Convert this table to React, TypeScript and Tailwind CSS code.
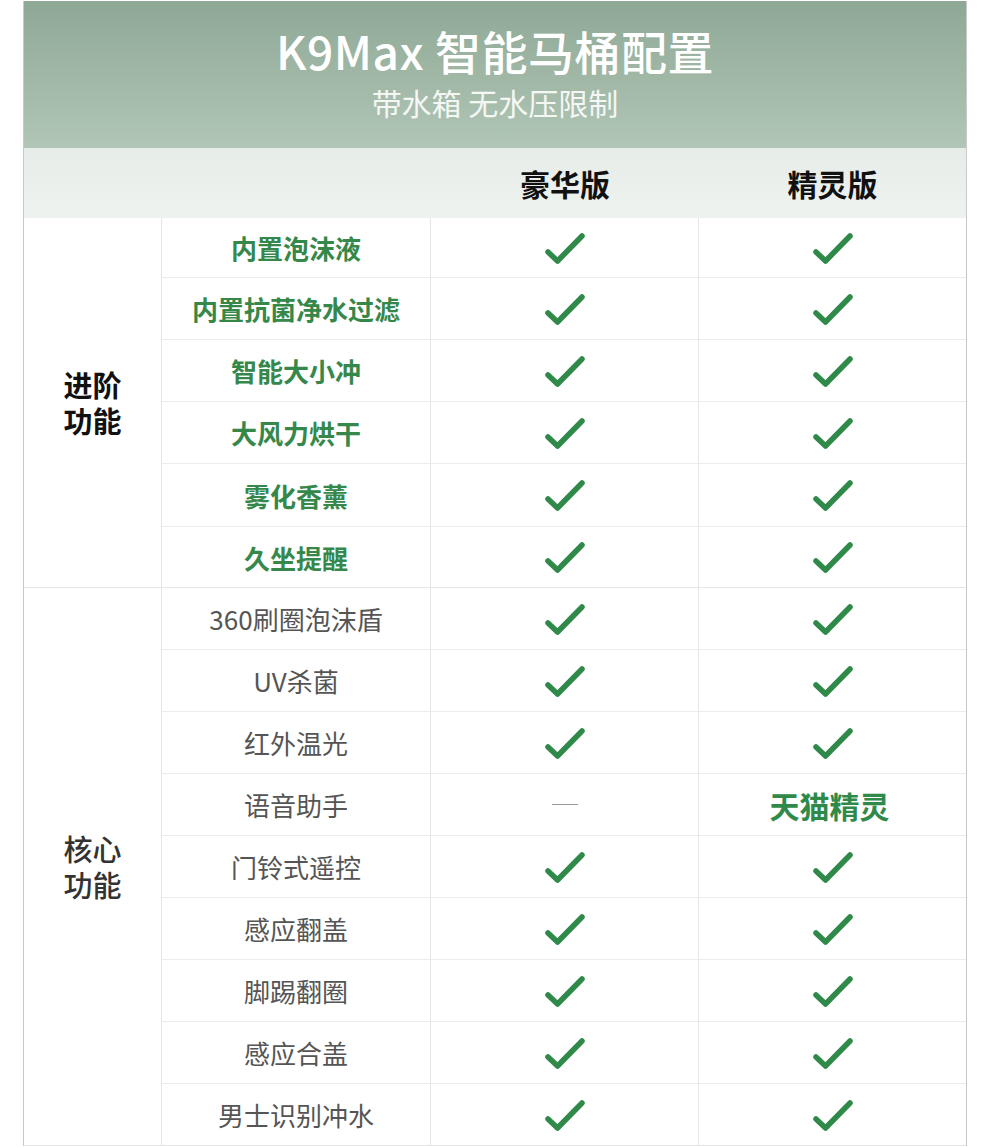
import React from "react";

const font = { fontFamily: '"Noto Sans CJK SC", "Noto Sans", sans-serif' };

type Row = { name: string; a: "check" | "dash"; b: "check" | "tmall"; h: string };

const advanced: Row[] = [
  { name: "内置泡沫液", a: "check", b: "check", h: "h-[60px]" },
  { name: "内置抗菌净水过滤", a: "check", b: "check", h: "h-[62px]" },
  { name: "智能大小冲", a: "check", b: "check", h: "h-[62px]" },
  { name: "大风力烘干", a: "check", b: "check", h: "h-[62px]" },
  { name: "雾化香薰", a: "check", b: "check", h: "h-[63px]" },
  { name: "久坐提醒", a: "check", b: "check", h: "h-[60px]" },
];

const core: Row[] = [
  { name: "360刷圈泡沫盾", a: "check", b: "check", h: "h-[62px]" },
  { name: "UV杀菌", a: "check", b: "check", h: "h-[62px]" },
  { name: "红外温光", a: "check", b: "check", h: "h-[62px]" },
  { name: "语音助手", a: "dash", b: "tmall", h: "h-[62px]" },
  { name: "门铃式遥控", a: "check", b: "check", h: "h-[62px]" },
  { name: "感应翻盖", a: "check", b: "check", h: "h-[62px]" },
  { name: "脚踢翻圈", a: "check", b: "check", h: "h-[62px]" },
  { name: "感应合盖", a: "check", b: "check", h: "h-[62px]" },
  { name: "男士识别冲水", a: "check", b: "check", h: "h-[61px]" },
];

const Check = () => (
  <svg width="42" height="34" viewBox="0 0 42 34">
    <polyline
      points="4,21 13.5,30 38,5"
      fill="none"
      stroke="#2f8a4a"
      strokeWidth="5.5"
      strokeLinecap="round"
      strokeLinejoin="round"
    />
  </svg>
);

const Cell = ({ v }: { v: string }) => {
  if (v === "check") return <Check />;
  if (v === "dash") return <div className="w-[26px] h-[1.5px] bg-[#9a9a9a]" />;
  return (
    <span className="text-[30px] font-bold text-[#2f8a4a] leading-none -ml-[6px]">
      天猫精灵
    </span>
  );
};

const Group = ({
  label,
  rows,
  strong,
}: {
  label: [string, string];
  rows: Row[];
  strong: boolean;
}) => (
  <div className="flex border-b border-[#e6e6e6]">
    <div className="w-[138px] shrink-0 border-r border-[#e6e6e6] flex items-center justify-center">
      <div
        className={
          strong
            ? "text-[29px] font-bold text-[#111] leading-[36px] text-center -mt-[2px]"
            : "text-[29px] font-medium text-[#333] leading-[36px] text-center -mt-[2px]"
        }
      >
        <div>{label[0]}</div>
        <div>{label[1]}</div>
      </div>
    </div>
    <div className="flex-1">
      {rows.map((r, i) => (
        <div
          key={r.name}
          className={
            i === rows.length - 1
              ? "grid grid-cols-[269px_268px_267px] " + r.h
              : "grid grid-cols-[269px_268px_267px] border-b border-[#ececec] " + r.h
          }
        >
          <div
            className={
              strong
                ? "flex items-center justify-center border-r border-[#e6e6e6] text-[26px] font-bold text-[#35884a]"
                : "flex items-center justify-center border-r border-[#e6e6e6] text-[26px] text-[#555]"
            }
          >
            {r.name}
          </div>
          <div className="flex items-center justify-center border-r border-[#e6e6e6]">
            <Cell v={r.a} />
          </div>
          <div className="flex items-center justify-center">
            <Cell v={r.b} />
          </div>
        </div>
      ))}
    </div>
  </div>
);

export default function App() {
  return (
    <div className="w-[990px] min-h-[1147px] bg-white" style={font}>
      <div className="ml-[23px] w-[944px] border-x border-[#c9c9c9]">
        <div className="mt-px h-[147px] bg-gradient-to-b from-[#8fa896] to-[#b1c6b6] flex flex-col items-center pt-[20px]">
          <h1 className="text-[46px] leading-[58px] font-medium text-white tracking-[0.5px]">
            K9Max 智能马桶配置
          </h1>
          <p className="mt-[5px] text-[30px] leading-[36px] text-[#f4f7f4]">
            带水箱 无水压限制
          </p>
        </div>
        <div className="h-[70px] grid grid-cols-[138px_269px_268px_267px] bg-gradient-to-b from-[#e6ece7] to-[#eff3f0]">
          <div />
          <div />
          <div className="flex items-center justify-center text-[30px] font-bold text-[#111]">
            豪华版
          </div>
          <div className="flex items-center justify-center text-[30px] font-bold text-[#111]">
            精灵版
          </div>
        </div>
        <Group label={["进阶", "功能"]} rows={advanced} strong />
        <Group label={["核心", "功能"]} rows={core} strong={false} />
      </div>
    </div>
  );
}
